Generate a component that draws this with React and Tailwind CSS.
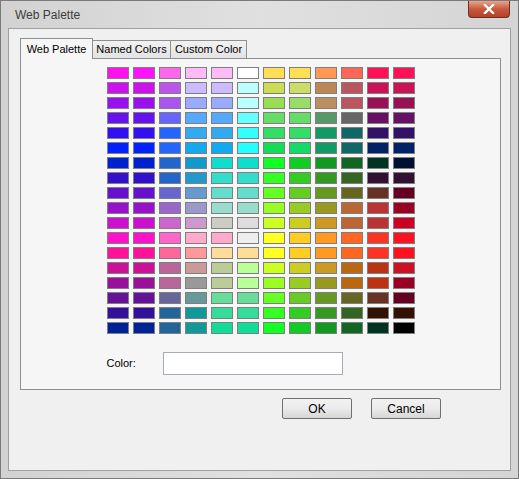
const ROWS = [
  ["#ff11ee", "#ff11ff", "#ff66ee", "#ffbbf5", "#ffbbf5", "#ffffff", "#ffdd55", "#ffe055", "#ff9955", "#ff6655", "#ff1155", "#ff1155"],
  ["#cc11ee", "#cc11ee", "#bb55ee", "#ccbbff", "#ccbbff", "#bbffff", "#ccdd55", "#ccdd66", "#bb8855", "#bb5560", "#cc1155", "#cc1155"],
  ["#9911ee", "#9911ee", "#aa55ee", "#99aaff", "#99aaff", "#bbffff", "#99dd55", "#99dd66", "#bb9060", "#bb5560", "#991155", "#991155"],
  ["#6611ee", "#6611ee", "#6666ff", "#55aaff", "#55aaff", "#66ffff", "#66dd66", "#66dd66", "#559966", "#666666", "#661166", "#661166"],
  ["#3311ee", "#3311ee", "#2266ff", "#33aaee", "#33aaee", "#33ffff", "#33dd66", "#33dd66", "#119966", "#116666", "#331166", "#331166"],
  ["#0022ff", "#0022ff", "#2266ff", "#11aaee", "#11aaee", "#22ffff", "#11dd55", "#11dd66", "#119966", "#116666", "#002266", "#002266"],
  ["#0022cc", "#0022cc", "#2266cc", "#1199cc", "#11ddcc", "#11ddcc", "#11ff22", "#11cc22", "#119922", "#116622", "#003322", "#001133"],
  ["#3311cc", "#3311cc", "#2266cc", "#2299cc", "#33ddcc", "#33ddcc", "#33ff22", "#33cc22", "#339922", "#336622", "#331133", "#331133"],
  ["#6611cc", "#6611cc", "#6666cc", "#6699cc", "#66ddcc", "#66ddcc", "#66ff22", "#66cc22", "#669922", "#666622", "#663322", "#660022"],
  ["#9911cc", "#9911cc", "#9966cc", "#9999cc", "#99ddcc", "#99ddcc", "#99ff22", "#99cc22", "#999922", "#bb6633", "#bb3333", "#990022"],
  ["#cc11cc", "#cc11cc", "#cc66cc", "#cc99cc", "#ccccc4", "#dddddd", "#ccff22", "#cccc22", "#cc9922", "#bb6633", "#bb3333", "#cc0022"],
  ["#ff11cc", "#ff11cc", "#ff66cc", "#ffaacc", "#ffaacc", "#eeeeee", "#ffff22", "#ffcc22", "#ff9922", "#ff6622", "#ff3322", "#ff1122"],
  ["#ff1199", "#ff1199", "#ff6699", "#ff9999", "#ffdd99", "#ffdd99", "#ffff22", "#ffcc22", "#ff9922", "#ff6622", "#ff3322", "#ff1122"],
  ["#cc1199", "#cc1199", "#bb6699", "#cc9999", "#bbcc99", "#bbff99", "#ccff22", "#cccc22", "#cc9922", "#bb6611", "#bb3311", "#cc1122"],
  ["#991199", "#991199", "#bb6699", "#999999", "#bbcc99", "#bbff99", "#99ff22", "#99cc22", "#999922", "#bb6611", "#bb3311", "#990022"],
  ["#661199", "#661199", "#666699", "#669999", "#66dd99", "#66dd99", "#66ff22", "#66cc22", "#669922", "#666622", "#663322", "#660022"],
  ["#331199", "#331199", "#226699", "#119999", "#33dd99", "#33dd99", "#33ff22", "#33cc22", "#339922", "#336622", "#331100", "#331100"],
  ["#002299", "#002299", "#226699", "#119999", "#11dd99", "#11dd99", "#11ff22", "#11cc22", "#119922", "#116622", "#003322", "#000000"],
];

function Tab({ label, active, width }) {
  if (active) {
    return (
      <div
        className="relative z-10 -mb-px flex h-[21px] items-center justify-center border border-b-0 border-[#8e8f8f] bg-[#f6f6f6] text-[11px] text-black"
        style={{ width }}
      >
        {label}
      </div>
    );
  }
  return (
    <div
      className="-ml-px flex h-[18px] items-center justify-center border border-b-0 border-[#8e8f8f] bg-gradient-to-b from-[#f2f2f2] to-[#e3e3e3] text-[11px] text-black"
      style={{ width }}
    >
      {label}
    </div>
  );
}

function Button({ children }) {
  return (
    <button className="flex h-[21px] w-[70px] items-center justify-center rounded-[2px] border border-[#707070] bg-gradient-to-b from-[#f2f2f2] via-[#ebebeb] to-[#d6d6d6] text-[12px] text-black">
      {children}
    </button>
  );
}

export default function App() {
  return (
    <div className="flex h-[479px] w-[519px] flex-col overflow-hidden border border-[#7a7a7a] bg-gradient-to-r from-[#d2d2d2] via-[#e0e0e0] to-[#d4d4d4] font-['Liberation_Sans',Arial,sans-serif]">
      {/* title bar */}
      <div className="flex h-[27px] shrink-0 items-start justify-between pl-[14px] pr-[8px]">
        <span className="mt-[5px] text-[12px] text-[#3c3c3c]">Web Palette</span>
        <div className="flex h-[17px] w-[42px] items-center justify-center rounded-b-[4px] border border-t-0 border-[#6b3124] bg-gradient-to-b from-[#e9a48f] via-[#c8593c] to-[#b2402a]">
          <svg width="14" height="10" viewBox="0 0 14 10">
            <path d="M3 1 L11 9 M11 1 L3 9" stroke="#ffffff" strokeWidth="2.4" strokeLinecap="square" />
          </svg>
        </div>
      </div>

      {/* client area */}
      <div className="mx-[7px] mb-[7px] flex flex-1 flex-col border border-[#a0a0a0] bg-[#f0f0f0] pl-[11px] pr-[9px] pt-[9px]">
        <div className="flex items-end">
          <Tab label="Web Palette" active width={73} />
          <Tab label="Named Colors" width={79} />
          <Tab label="Custom Color" width={77} />
        </div>

        <div className="flex h-[332px] flex-col items-center border border-[#8e8f8f] bg-[#f6f6f6] pt-[8px]">
          <div className="grid grid-cols-[repeat(12,22px)] gap-x-[4px] gap-y-[3px]">
            {ROWS.flat().map((c, i) => (
              <div key={i} className="h-[12px] w-[22px] border border-[#7f7f7f]" style={{ background: c }} />
            ))}
          </div>

          <div className="mt-[18px] flex w-[308px] items-center">
            <span className="w-[56px] text-[11px] text-black">Color:</span>
            <div className="h-[23px] w-[180px] border border-[#a5acb5] bg-white" />
          </div>
        </div>

        <div className="mt-[8px] flex gap-[19px] pl-[262px]">
          <Button>OK</Button>
          <Button>Cancel</Button>
        </div>
      </div>
    </div>
  );
}
